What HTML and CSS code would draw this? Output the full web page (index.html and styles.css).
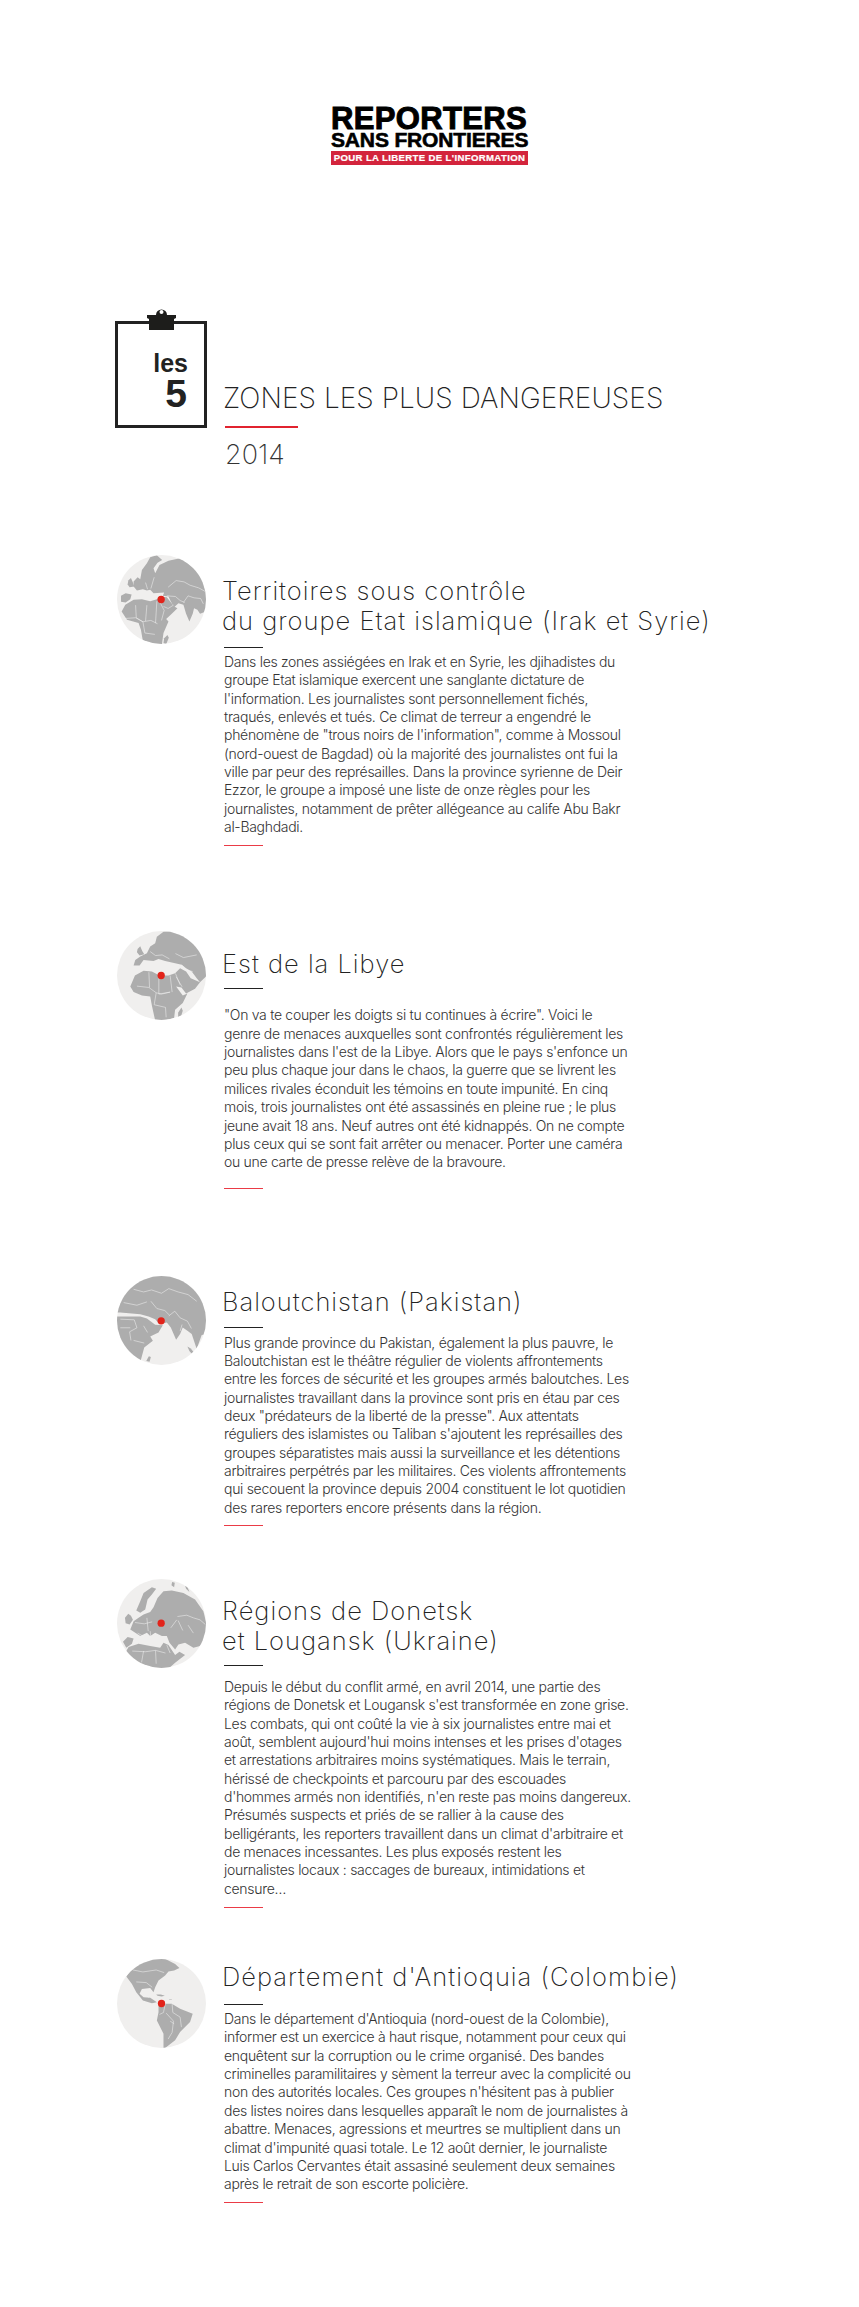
FILE: index.html
```html
<!DOCTYPE html>
<html lang="fr">
<head>
<meta charset="utf-8">
<title>Les 5 zones les plus dangereuses</title>
<link rel="stylesheet" href="styles.css">
</head>
<body>
<header class="logo">
  <div class="logo-a">REPORTERS</div>
  <div class="logo-b">SANS FRONTIERES</div>
  <div class="logo-c">POUR LA LIBERTE DE L'INFORMATION</div>
</header>

<section class="lead">
  <div class="board">
    <svg class="clip" viewBox="0 0 29 23"><path d="M9 8a5.5 5.5 0 0 1 11 0h9v3l-2 1v11H2V12l-2-1V8z" fill="#1d1d1b"/><circle cx="14.5" cy="5" r="2" fill="#fff"/></svg>
    <div class="paper"><span class="les">les</span><span class="five">5</span></div>
  </div>
  <div class="lead-text">
    <h1>ZONES LES PLUS DANGEREUSES</h1>
    <div class="lead-rule"></div>
    <div class="year">2014</div>
  </div>
</section>

<main>
<article class="zone z1">
  <svg class="globe" viewBox="50 45 268 268">
    <defs><clipPath id="c1"><circle cx="184" cy="179" r="134"/></clipPath></defs>
    <circle class="sea" cx="184" cy="179" r="134"/>
    <g clip-path="url(#c1)">
      <path class="land" d="M100 125L112 112 120 118 125 90 140 70 150 52 170 46 186 60 172 68 160 85 165 100 178 75 205 62 240 55 262 68 290 92 310 125 320 165 318 215 300 222 292 210 282 205 278 222 268 245 258 222 250 195 235 190 222 202 212 185 205 170 188 168 192 158 160 160 150 150 140 152 128 148 110 152 100 140Z"/>
      <path class="land" d="M84 122l8-8 6 14 4 12-14 2-6-8z"/>
      <path class="land" d="M62 168l14-8 18 4-4 14-14 10-14-2z"/>
      <path class="land" d="M64 215L75 195 100 180 125 178 150 184 170 178 178 170 200 172 222 200 232 205 215 222 198 238 205 245 190 280 185 316 130 316 122 270 115 250 80 240Z"/>
      <path class="land" d="M192 296l10-10 4 8-8 20-8-4z"/>
      <path class="bord" d="M228 122l24 4 18 10 26 8 22 12M204 142l24-20M200 168l26 2 14 12 14 6M264 168l18 6 20 2 8 16M250 188l14-20M76 236l30-2 22 12 24-4 20 10M106 196l2 38 20 12 6 34 30 4M140 196l-4 48M170 184l-4 66M172 172l20 40-8 30M136 128l6 20M162 112l-10 34M190 200l14 6 16-10"/>
    </g>
    <circle class="dot" cx="183" cy="179" r="11"/>
  </svg>
  <div class="body">
    <h2>Territoires sous contrôle<br>du groupe Etat islamique (Irak et Syrie)</h2>
    <div class="rule"></div>
    <p>Dans les zones assiégées en Irak et en Syrie, les djihadistes du<br>groupe Etat islamique exercent une sanglante dictature de<br>l'information. Les journalistes sont personnellement fichés,<br>traqués, enlevés et tués. Ce climat de terreur a engendré le<br>phénomène de "trous noirs de l'information", comme à Mossoul<br>(nord-ouest de Bagdad) où la majorité des journalistes ont fui la<br>ville par peur des représailles. Dans la province syrienne de Deir<br>Ezzor, le groupe a imposé une liste de onze règles pour les<br>journalistes, notamment de prêter allégeance au calife Abu Bakr<br>al-Baghdadi.</p>
    <div class="rule red"></div>
  </div>
</article>

<article class="zone z2">
  <svg class="globe" viewBox="50 38 268 268">
    <defs><clipPath id="c2"><circle cx="184" cy="172" r="134"/></clipPath></defs>
    <circle class="sea" cx="184" cy="172" r="134"/>
    <g clip-path="url(#c2)">
      <path class="land" d="M105 125L120 115 140 105 150 85 165 75 170 55 190 40 240 36 290 60 320 120 318 175 300 192 290 180 275 160 258 150 245 140 225 135 195 128 175 122 160 128 130 125 118 142 100 142Z"/>
      <path class="land" d="M112 92l8-8 6 14 6 10-14 4-8-10z"/>
      <path class="land" d="M90 205L104 172 130 158 155 160 178 172 205 172 225 165 240 150 258 160 272 180 300 192 285 212 258 226 244 208 228 205 248 232 262 226 248 255 225 275 222 300 190 308 165 308 155 262 150 235 125 232 100 222Z"/>
      <path class="land" d="M234 284l10-16 4 10-6 20-8 4z"/>
      <path class="bord" d="M110 204l36 4 22 16 16 4 26-6M146 162l2 46M176 172l0 56 34-6M210 172l6 50M168 224l-6 36 34 8M196 268l2 30M150 100l16 12 20-2 22 12M226 106l24 12 40-8M244 140l14 16 20 4M226 166l14 34M228 176l18 30"/>
    </g>
    <circle class="dot" cx="183" cy="172" r="11"/>
  </svg>
  <div class="body">
    <h2>Est de la Libye</h2>
    <div class="rule"></div>
    <p>"On va te couper les doigts si tu continues à écrire". Voici le<br>genre de menaces auxquelles sont confrontés régulièrement les<br>journalistes dans l'est de la Libye. Alors que le pays s'enfonce un<br>peu plus chaque jour dans le chaos, la guerre que se livrent les<br>milices rivales éconduit les témoins en toute impunité. En cinq<br>mois, trois journalistes ont été assassinés en pleine rue ; le plus<br>jeune avait 18 ans. Neuf autres ont été kidnappés. On ne compte<br>plus ceux qui se sont fait arrêter ou menacer. Porter une caméra<br>ou une carte de presse relève de la bravoure.</p>
    <div class="rule red"></div>
  </div>
</article>

<article class="zone z3">
  <svg class="globe" viewBox="50 50 268 268">
    <defs><clipPath id="c3"><circle cx="184" cy="184" r="134"/></clipPath></defs>
    <circle class="sea" cx="184" cy="184" r="134"/>
    <g clip-path="url(#c3)">
      <path class="land" d="M50 50H320V225L305 228 290 270 275 225 262 215 248 205 240 225 228 242 212 205 200 190 178 195 165 180 145 172 120 165 60 160 50 160Z"/>
      <path class="land" d="M50 172L120 172 140 178 165 197 188 198 175 220 150 232 158 245 132 265 120 310 80 318 50 318Z"/>
      <path class="land" d="M138 306l8-14 6 2-4 14z"/>
      <path class="land" d="M262 262l10 6 14 18 4 8-8-2-14-16z"/>
      <path class="bord" d="M100 90l30 8 24-6 30 10 22-14 28 10 30 8 26 20M152 126l18 22 24 6 14 14M206 170l18-14 16 20 22 10 12 22M246 196l-6 20M60 180l42 2 8 24-22 12 4 26M90 206l-30 0M100 244l32 8M130 200l12 20M70 130l40 8 30-10"/>
    </g>
    <circle class="dot" cx="183" cy="185" r="11"/>
  </svg>
  <div class="body">
    <h2>Baloutchistan (Pakistan)</h2>
    <div class="rule"></div>
    <p>Plus grande province du Pakistan, également la plus pauvre, le<br>Baloutchistan est le théâtre régulier de violents affrontements<br>entre les forces de sécurité et les groupes armés baloutches. Les<br>journalistes travaillant dans la province sont pris en étau par ces<br>deux "prédateurs de la liberté de la presse". Aux attentats<br>réguliers des islamistes ou Taliban s'ajoutent les représailles des<br>groupes séparatistes mais aussi la surveillance et les détentions<br>arbitraires perpétrés par les militaires. Ces violents affrontements<br>qui secouent la province depuis 2004 constituent le lot quotidien<br>des rares reporters encore présents dans la région.</p>
    <div class="rule red"></div>
  </div>
</article>

<article class="zone z4">
  <svg class="globe" viewBox="50 33 268 268">
    <defs><clipPath id="c4"><circle cx="184" cy="167" r="134"/></clipPath></defs>
    <circle class="sea" cx="184" cy="167" r="134"/>
    <g clip-path="url(#c4)">
      <path class="land" d="M100 160L115 150 130 140 150 132 160 118 172 90 190 70 215 68 250 75 285 95 310 130 320 170 320 215 300 235 280 240 255 225 235 230 225 245 208 225 200 205 185 205 165 195 150 205 140 195 120 205 105 195 90 185Z"/>
      <path class="land" d="M108 128L120 100 130 75 155 58 168 62 155 80 142 95 135 125 120 135Z"/>
      <path class="land" d="M74 150l10-12 8 6 6 12-10 14-12-4zM68 222l14-14 18 4-5 16-17 12zM216 42l8 2-2 14-8-6zM254 50l8 6 6 16-10-10z"/>
      <path class="land" d="M72 260L85 238 115 228 150 235 180 240 190 225 205 232 225 262 238 252 255 262 225 285 205 303H70Z"/>
      <path class="bord" d="M232 146l28-4 20 8 20 6 16 14M212 180l18-24M248 188l-14-30M280 196l-16-24M104 164l28 4 24-6M96 250l40 2 30-4 30 8M130 250l-6 34M166 248l2 40M200 232l10 24M112 196l18 10M150 190l2 22M140 150l4 40"/>
    </g>
    <circle class="dot" cx="183" cy="166" r="11"/>
  </svg>
  <div class="body">
    <h2>Régions de Donetsk<br>et Lougansk (Ukraine)</h2>
    <div class="rule"></div>
    <p>Depuis le début du conflit armé, en avril 2014, une partie des<br>régions de Donetsk et Lougansk s'est transformée en zone grise.<br>Les combats, qui ont coûté la vie à six journalistes entre mai et<br>août, semblent aujourd'hui moins intenses et les prises d'otages<br>et arrestations arbitraires moins systématiques. Mais le terrain,<br>hérissé de checkpoints et parcouru par des escouades<br>d'hommes armés non identifiés, n'en reste pas moins dangereux.<br>Présumés suspects et priés de se rallier à la cause des<br>belligérants, les reporters travaillent dans un climat d'arbitraire et<br>de menaces incessantes. Les plus exposés restent les<br>journalistes locaux : saccages de bureaux, intimidations et<br>censure…</p>
    <div class="rule red"></div>
  </div>
</article>

<article class="zone z5">
  <svg class="globe" viewBox="50 65 268 268">
    <defs><clipPath id="c5"><circle cx="184" cy="199" r="134"/></clipPath></defs>
    <circle class="sea" cx="184" cy="199" r="134"/>
    <g clip-path="url(#c5)">
      <path class="land" d="M78 118L100 88 135 66 190 62 225 80 238 92 222 100 205 103 195 115 175 130 165 150 160 165 150 152 125 155 118 170 130 180 150 182 170 195 155 198 128 190 108 165 95 140Z"/>
      <path class="land" d="M175 200L215 200 240 215 278 230 270 255 240 285 225 310 195 333 190 333 190 290 170 250 175 225Z"/>
      <path class="land" d="M168 172l14 0 12 4-10 2-12-2zM206 186l8 0 2 2-8 0z"/>
      <path class="bord" d="M98 98l30 6 40-6 24 8M108 134l30 2 18 14M196 196l-6 30-12 6M216 200l2 26 22 14 4 30M198 228l22 24-4 34-12 20M222 260l-12-8M132 172l14 8"/>
    </g>
    <circle class="dot" cx="184" cy="199" r="11"/>
  </svg>
  <div class="body">
    <h2>Département d'Antioquia (Colombie)</h2>
    <div class="rule"></div>
    <p>Dans le département d'Antioquia (nord-ouest de la Colombie),<br>informer est un exercice à haut risque, notamment pour ceux qui<br>enquêtent sur la corruption ou le crime organisé. Des bandes<br>criminelles paramilitaires y sèment la terreur avec la complicité ou<br>non des autorités locales. Ces groupes n'hésitent pas à publier<br>des listes noires dans lesquelles apparaît le nom de journalistes à<br>abattre. Menaces, agressions et meurtres se multiplient dans un<br>climat d'impunité quasi totale. Le 12 août dernier, le journaliste<br>Luis Carlos Cervantes était assasiné seulement deux semaines<br>après le retrait de son escorte policière.</p>
    <div class="rule red"></div>
  </div>
</article>
</main>
</body>
</html>
```

FILE: styles.css
```css
* { box-sizing: border-box; }
html, body { margin: 0; padding: 0; background: #fff; }
body {
  height: 2307px;
  overflow: hidden;
  font-family: Inter, "Liberation Sans", sans-serif;
  color: #222;
}
.logo {
  width: 197px;
  margin: 0 0 0 331px;
  padding-top: 107px;
  font-family: "Liberation Sans", Arial, sans-serif;
  font-weight: 700;
  color: #000;
}
.logo-a {
  font-size: 31px;
  line-height: 24px;
  letter-spacing: 0.35px;
  -webkit-text-stroke: 1px #000;
  white-space: nowrap;
}
.logo-b {
  font-size: 21px;
  line-height: 17px;
  letter-spacing: -0.15px;
  -webkit-text-stroke: 0.6px #000;
  white-space: nowrap;
}
.logo-c {
  margin-top: 3px;
  height: 14px;
  background: #d3243c;
  color: #fff;
  font-size: 9.6px;
  line-height: 14px;
  letter-spacing: 0.35px;
  -webkit-text-stroke: 0.2px #fff;
  text-align: center;
  white-space: nowrap;
}
.lead {
  display: flex;
  margin: 142px 0 0 115px;
  height: 248px;
}
.board { position: relative; width: 92px; padding-top: 14px; }
.clip { position: absolute; left: 32px; top: 0; width: 29px; height: 23px; }
.paper {
  height: 107px;
  border: 3px solid #222;
  display: flex;
  flex-direction: column;
  align-items: flex-end;
  padding: 26px 16px 0 0;
  font-family: "Liberation Sans", Arial, sans-serif;
  font-weight: 700;
}
.les { font-size: 25px; line-height: 26px; }
.five { font-size: 39px; line-height: 36px; margin-right: 1px; }
.lead-text { padding: 73px 0 0 16px; }
h1 {
  margin: 0;
  font-size: 28px;
  line-height: 36px;
  font-weight: 200;
  letter-spacing: 0.05px;
  color: #222;
  white-space: nowrap;
}
.lead-rule { width: 73px; height: 2px; margin: 10px 0 0 2px; background: #e1232f; }
.year {
  margin: 12px 0 0 2px;
  font-size: 27px;
  line-height: 30px;
  font-weight: 200;
  color: #333;
}
.zone {
  display: flex;
  align-items: flex-start;
  margin-left: 117px;
}
.globe { width: 89px; height: 89px; flex: none; }
.sea { fill: #f0efee; }
.land { fill: #adadad; }
.bord { fill: none; stroke: #f2f2f2; stroke-width: 1.6; }
.dot { fill: #e2231a; }
.body { margin-left: 16px; }
h2 {
  margin: 0;
  font-size: 25.5px;
  line-height: 30px;
  font-weight: 200;
  letter-spacing: 1px;
  color: #222;
  white-space: nowrap;
}
.rule { width: 39px; height: 1px; margin-left: 2px; background: #222; }
.rule.red { background: #ea3b46; }
p {
  margin: 0 0 0 2px;
  font-size: 14px;
  line-height: 18.35px;
  font-weight: 300;
  letter-spacing: -0.3px;
  color: #333;
  white-space: nowrap;
}
.z1 { margin-top: 0; }
.z1 .body { padding-top: 21px; }
.z1 .rule { margin-top: 11px; }
.z1 p { margin-top: 5px; }
.z1 .rule.red { margin-top: 9px; }
.z2 { margin-top: 85px; }
.z2 .body { padding-top: 18px; }
.z2 .rule { margin-top: 9px; }
.z2 p { margin-top: 17px; }
.z2 .rule.red { margin-top: 16px; }
.z3 { margin-top: 87px; }
.z3 .body { padding-top: 11px; }
.z3 .rule { margin-top: 10px; }
.z3 p { margin-top: 6px; }
.z3 .rule.red { margin-top: 8px; }
.z4 { margin-top: 53px; }
.z4 .body { padding-top: 17px; }
.z4 .rule { margin-top: 9px; }
.z4 p { margin-top: 12px; }
.z4 .rule.red { margin-top: 9px; }
.z5 { margin-top: 51px; }
.z5 .body { padding-top: 3px; }
.z5 .rule { margin-top: 12px; }
.z5 p { margin-top: 5px; }
.z5 .rule.red { margin-top: 8px; }
```
